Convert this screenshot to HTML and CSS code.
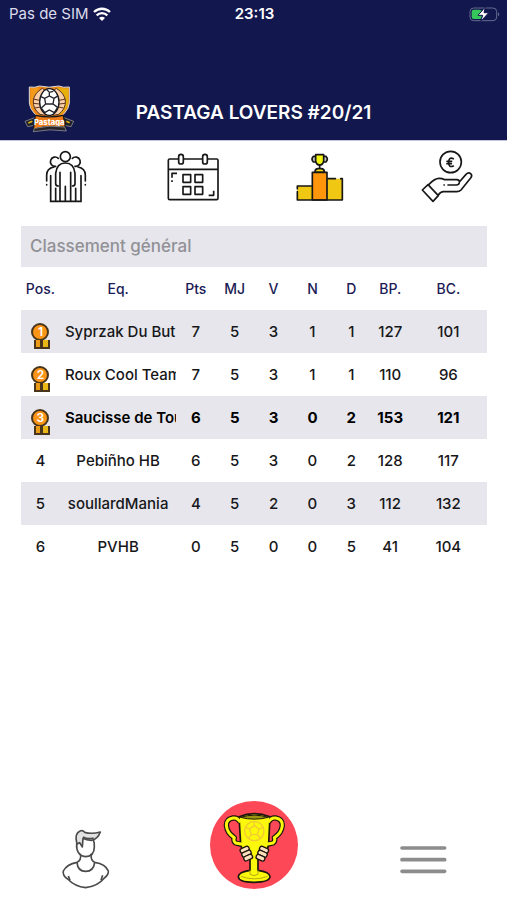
FILE: index.html
```html
<!DOCTYPE html>
<html lang="fr">
<head>
  <meta charset="UTF-8" />
  <meta name="viewport" content="width=device-width, initial-scale=1.0"/>
  <title>Pastaga Lovers #20/21</title>
  <link rel="stylesheet" href="styles.css">
</head>
<body>

  <header>
    <div class="status-bar">
      <div class="carrier">
        Pas de SIM
        <svg width="18" height="14" viewBox="0 0 54 42" fill="none" stroke="#fff" stroke-width="7">
          <path d="M3 15C17 2 37 2 51 15"/>
          <path d="M11 25c9-9 23-9 32 0"/>
          <path d="M18 33q9-8 18 0l-9 9z" fill="#fff" stroke="none"/>
        </svg>
      </div>
      <div class="time">23:13</div>
      <svg class="battery" width="31" height="16" viewBox="0 0 93 48">
        <rect x="3" y="6" width="80" height="38" rx="11" fill="none" stroke="#686b92" stroke-width="3"/>
        <path d="M87 19q8 6 0 12z" fill="#686b92"/>
        <rect x="8" y="11" width="30" height="28" rx="6" fill="#35c759"/>
        <path d="M49 3L27 28h14l-6 19 24-27H45z" fill="#fff" stroke="#12174d" stroke-width="3"/>
      </svg>
    </div>
    <div class="league">
      <svg class="logo" width="50" height="48" viewBox="0 0 150 144">
        <path d="M16 6Q34 9 46 3q30 7 58 0 14 6 32 3v48q-2 33-60 64Q18 87 16 54z" fill="#ef8614" stroke="#d9d9de" stroke-width="3"/>
        <path d="M98 7q18 5 35 3v44q-3 20-26 37z" fill="#e7b00c"/>
        <path d="M20 10l24-2-16 68Q20 64 20 50z" fill="#f39a1b"/>
        <path d="M55 10Q30 25 28 48t20 40l16 3V17zM97 10q25 15 27 38t-20 40l-16 3V17z" fill="#fbd0a8" stroke="#5a3420" stroke-width="3"/>
        <path d="M27 42l20 4M28 55l19 2M33 69l16-3M125 42l-20 4M124 55l-19 2M119 69l-16-3" stroke="#5a3420" stroke-width="3"/>
        <ellipse cx="76" cy="51" rx="29" ry="40" fill="#fff" stroke="#17171c" stroke-width="4"/>
        <path d="M67 12l9 10 12-3M76 22v11M62 40l14-7 14 7-3 17H65zM62 40l-13-6M90 40l13-8M65 57l-13 12M87 57l14 10M52 69l10 14M101 67l-10 16M62 83l14-8 15 8" fill="none" stroke="#22222a" stroke-width="4"/>
        <path d="M3 109l34-13 4 23-30 6zM149 109l-34-13-4 23 30 6z" fill="#20202a" stroke="#aaa" stroke-width="2"/>
        <path d="M13 114l12-5M127 109l10 4" stroke="#ddb51a" stroke-width="5"/>
        <path d="M34 91q42 9 84 0l6 36q-48-8-96 6z" fill="#f07d18" stroke="#17171c" stroke-width="4"/>
        <text class="logo-text" x="76" y="119" text-anchor="middle">Pastaga</text>
        <path d="M31 130q45-11 91-4l5 12q-48-8-99 2z" fill="#29262a" stroke="#a7a7ad" stroke-width="2"/>
      </svg>
      <h1>PASTAGA LOVERS #20/21</h1>
    </div>
  </header>

  <nav class="tabs">
    <a href="#equipes" aria-label="Équipes">
      <svg width="56" height="56" viewBox="16 27 168 168" fill="none" stroke="#171717" stroke-width="5" stroke-linecap="round">
        <circle cx="107" cy="50" r="15"/>
        <path d="M86 55a14 14 0 1 0-8 24M128 55a14 14 0 1 1 8 24"/>
        <path d="M78 132V100q3-31 29-31t29 31v32q-1 6-8 6M78 132q1 6 8 6"/>
        <path d="M51 123v-18q0-20 22-24M167 123v-18q0-20-22-24M51 134v1M167 134v1"/>
        <path d="M63 107v77h91v-77M78 145v39M91 97v87M107 139v45M123 97v87M138 145v39"/>
      </svg>
    </a>
    <a href="#calendrier" aria-label="Calendrier">
      <svg width="56" height="56" viewBox="397 27 168 168" fill="none" stroke="#171717" stroke-width="5" stroke-linejoin="round">
        <path d="M446 57h-26q-4 0-4 4v114q0 4 4 4h141q4 0 4-4V61q0-4-4-4h-27M462 57h56M416 88h149"/>
        <rect x="447" y="43" width="14" height="29" rx="7"/>
        <rect x="519" y="43" width="14" height="29" rx="7"/>
        <path d="M460 104h23v23h-23zM496 104h23v23h-23zM460 140h23v23h-23zM496 140h23v23h-23z"/>
        <path d="M427 113v-13h15M427 121v5M537 166h15v-14"/>
      </svg>
    </a>
    <a href="#classement" aria-label="Classement">
      <svg width="56" height="56" viewBox="27 27 168 168" stroke="#171717" stroke-width="5" stroke-linejoin="round" stroke-linecap="round">
        <path d="M52 138h45v42H52zM141 116h46v64h-46z" fill="#f0c713" stroke="none"/>
        <path d="M97 97h44v83H97z" fill="#ff950a"/>
        <path d="M52 146v-8h42M52 155v25h135v-64h-5M144 116h22" fill="none"/>
        <path d="M109 49h-9q-8 8 0 17h10M129 49h9q8 8 0 17h-10" fill="#bfc2be"/>
        <path d="M107 44h24v19q-2 12-12 12t-12-12z" fill="#f3f413"/>
        <path d="M119 75v10M105 96q0-10 10-10h8q10 0 10 10z" fill="#f0df12"/>
      </svg>
    </a>
    <a href="#cagnotte" aria-label="Cagnotte">
      <svg width="56" height="56" viewBox="407 27 168 168" fill="none" stroke="#171717" stroke-width="5" stroke-linejoin="round" stroke-linecap="round">
        <circle cx="511" cy="66" r="32"/>
        <path d="M519 56q-14-6-14 11t14 11M500 64h14M500 71h13"/>
        <path d="M426 150l17-16 31 33-16 17z"/>
        <path d="M446 133q17-18 30-18 10 0 17 4h36q9 0 8 9-1 7-9 7h-25M491 135h1M537 126l20-23q7-7 14-2 6 5 0 13l-29 36q-5 5-13 5h-40q-8 0-15 10"/>
      </svg>
    </a>
  </nav>

  <main>
    <h2>Classement général</h2>
    <table>
      <thead>
        <tr>
          <th>Pos.</th><th class="team">Eq.</th><th>Pts</th><th>MJ</th><th>V</th><th>N</th><th>D</th><th>BP.</th><th class="last">BC.</th>
        </tr>
      </thead>
      <tbody>
        <tr class="podium">
          <td><span class="medal">1</span></td><td class="team">Syprzak Du But</td><td>7</td><td>5</td><td>3</td><td>1</td><td>1</td><td>127</td><td>101</td>
        </tr>
        <tr class="podium">
          <td><span class="medal">2</span></td><td class="team">Roux Cool Team</td><td>7</td><td>5</td><td>3</td><td>1</td><td>1</td><td>110</td><td>96</td>
        </tr>
        <tr class="podium mine">
          <td><span class="medal">3</span></td><td class="team">Saucisse de Tou</td><td>6</td><td>5</td><td>3</td><td>0</td><td>2</td><td>153</td><td>121</td>
        </tr>
        <tr>
          <td>4</td><td class="team">Pebiñho HB</td><td>6</td><td>5</td><td>3</td><td>0</td><td>2</td><td>128</td><td>117</td>
        </tr>
        <tr>
          <td>5</td><td class="team">soullardMania</td><td>4</td><td>5</td><td>2</td><td>0</td><td>3</td><td>112</td><td>132</td>
        </tr>
        <tr>
          <td>6</td><td class="team">PVHB</td><td>0</td><td>5</td><td>0</td><td>0</td><td>5</td><td>41</td><td>104</td>
        </tr>
      </tbody>
    </table>
  </main>

  <footer>
    <a href="#profil" aria-label="Profil">
      <svg width="56" height="64" viewBox="19 30 168 192" fill="none" stroke="#4b4b4b" stroke-width="5" stroke-linejoin="round">
        <path d="M78 86q-2 36 26 39 27-1 27-29 1-12-3-21"/>
        <path d="M79 87q-9-31 9-39 8-4 14 4 21 6 47-1-8 22-27 25-15 0-25-6l-2 26-8-13z" fill="#e2e2e2"/>
        <path d="M97 66q14 8 32 3"/>
        <path d="M90 119q2 17-11 23-31 6-41 26-3 14 13 24 22 23 54 26 36-4 56-29 13-9 12-21-8-21-41-26-13-6-10-25"/>
        <path d="M79 142q2 27 26 27t27-27M53 183l5 13M156 181l-5 15"/>
      </svg>
    </a>
    <a href="#ligue" aria-label="Ligue">
      <svg width="88" height="88" viewBox="30 18 264 264" stroke="#1c160d" stroke-width="5" stroke-linejoin="round">
        <circle cx="162" cy="150" r="132" fill="#fc4857" stroke="none"/>
        <path d="M121 82q-8-15-22-13-20 3-20 22 2 23 24 37-4 10 4 16l17 4M205 82q8-15 22-13 20 3 20 22-2 23-24 37 4 10-4 16l-17 4" fill="none" stroke-width="16"/>
        <path d="M117 65q45-18 93 0l-4 80q-2 26-25 38l-7 5v38q34 5 36 18 0 18-48 18t-47-18q2-13 35-18v-38q-25-14-28-42z" fill="#fbf80c"/>
        <path d="M121 82q-8-15-22-13-20 3-20 22 2 23 24 37-4 10 4 16l20 4M205 82q8-15 22-13 20 3 20 22-2 23-24 37 4 10-4 16l-20 4" fill="none" stroke="#fbf80c" stroke-width="9"/>
        <path d="M121 67q42-13 84 0-42 11-84 0z" fill="#9a940e" stroke-width="3"/>
        <path d="M150 226v12q12 8 24 0v-12M123 244q40 15 80 0" fill="none" stroke="#b7ad12" stroke-width="3"/>
        <g fill="none" stroke="#f2ca32" stroke-width="4">
          <circle cx="163" cy="108" r="29"/>
          <path d="M149 102l14-10 14 10-5 17h-18zM163 80v12M177 102l13-5M172 119l10 13M154 119l-10 13M149 102l-13-5"/>
        </g>
        <g fill="#ffe0bd" stroke-width="4">
          <rect x="120" y="157" width="28" height="14" rx="6" transform="rotate(-24 134 164)"/>
          <rect x="125" y="169" width="29" height="14" rx="6" transform="rotate(-24 139 176)"/>
          <rect x="131" y="181" width="27" height="14" rx="6" transform="rotate(-24 144 188)"/>
          <rect x="178" y="157" width="28" height="14" rx="6" transform="rotate(24 192 164)"/>
          <rect x="173" y="169" width="29" height="14" rx="6" transform="rotate(24 187 176)"/>
          <rect x="168" y="181" width="27" height="14" rx="6" transform="rotate(24 181 188)"/>
        </g>
      </svg>
    </a>
    <button class="menu" aria-label="Menu">
      <svg width="56" height="44" viewBox="28 45 168 132" stroke="#8c8c8c" stroke-width="11" stroke-linecap="round">
        <path d="M49 54h128M49 89h128M49 124h128"/>
      </svg>
    </button>
  </footer>

</body>
</html>
```
FILE: styles.css
```css
* {
  box-sizing: border-box;
}

body {
  margin: 0;
  min-height: 100vh;
  display: flex;
  flex-direction: column;
  font-family: Inter, "Liberation Sans", sans-serif;
  font-size: 15px;
  color: #17171a;
  background: white;
}

svg {
  display: block;
  overflow: visible;
}

header {
  background: #12174d;
  color: white;
  border-bottom: 1px solid #c4c4dc;
}

.status-bar {
  display: grid;
  grid-template-columns: 1fr auto 1fr;
  align-items: center;
  height: 27px;
  padding: 0 7px 0 9px;
}

.carrier {
  display: flex;
  align-items: center;
  gap: 4px;
  color: #dcdcec;
}

.time {
  font-weight: 600;
}

.battery {
  justify-self: end;
}

.league {
  display: grid;
  grid-template-columns: 74px 1fr 74px;
  padding: 58px 0 7px;
}

.logo {
  justify-self: end;
}

.logo-text {
  font-size: 23px;
  font-weight: 800;
  fill: white;
}

h1 {
  margin: 0;
  padding-top: 14px;
  font-size: 19px;
  line-height: 28px;
  font-weight: 600;
  text-align: center;
}

.tabs {
  display: grid;
  grid-template-columns: repeat(4, 1fr);
  justify-items: center;
  padding: 8px 0 21px;
}

main {
  padding: 0 20px 0 21px;
}

h2 {
  margin: 0;
  padding: 0 9px;
  font-size: 17px;
  line-height: 41px;
  font-weight: 500;
  color: #919196;
  background: #e6e6ec;
}

/* Standings */
table {
  width: 100%;
  table-layout: fixed;
  border-collapse: collapse;
  text-align: center;
}

th, td {
  height: 43px;
  padding: 0;
  font-weight: 500;
  white-space: nowrap;
}

th {
  font-size: 14px;
  color: #1b1b55;
}

.team {
  width: 25%;
  overflow: hidden;
}

.last {
  width: 16.6%;
}

tbody tr:nth-child(odd) {
  background: #e6e6ec;
}

.podium .team {
  padding-left: 5px;
  text-align: left;
}

.mine td {
  font-weight: 700;
  color: black;
}

.mine .team {
  font-weight: 600;
}

.medal {
  position: relative;
  display: block;
  width: 18px;
  height: 18px;
  margin: 0 auto;
  border: 2px solid #49351c;
  border-radius: 50%;
  background: #fa9517;
  color: white;
  font-size: 12px;
  line-height: 14px;
  font-weight: 600;
}

/* ribbon under the medal */
.medal::after {
  content: "";
  position: absolute;
  top: 15px;
  left: 1px;
  width: 12px;
  height: 7px;
  border: 2px solid #49351c;
  border-top: 0;
  background: linear-gradient(90deg, #e99a16 35%, #49351c 35% 60%, #e9b716 60%);
}

/* Bottom bar */
footer {
  display: grid;
  grid-template-columns: repeat(3, 1fr);
  justify-items: center;
  align-items: end;
  margin-top: auto;
  padding-bottom: 11px;
}

.menu {
  padding: 0;
  border: 0;
  background: none;
  cursor: pointer;
}
```
